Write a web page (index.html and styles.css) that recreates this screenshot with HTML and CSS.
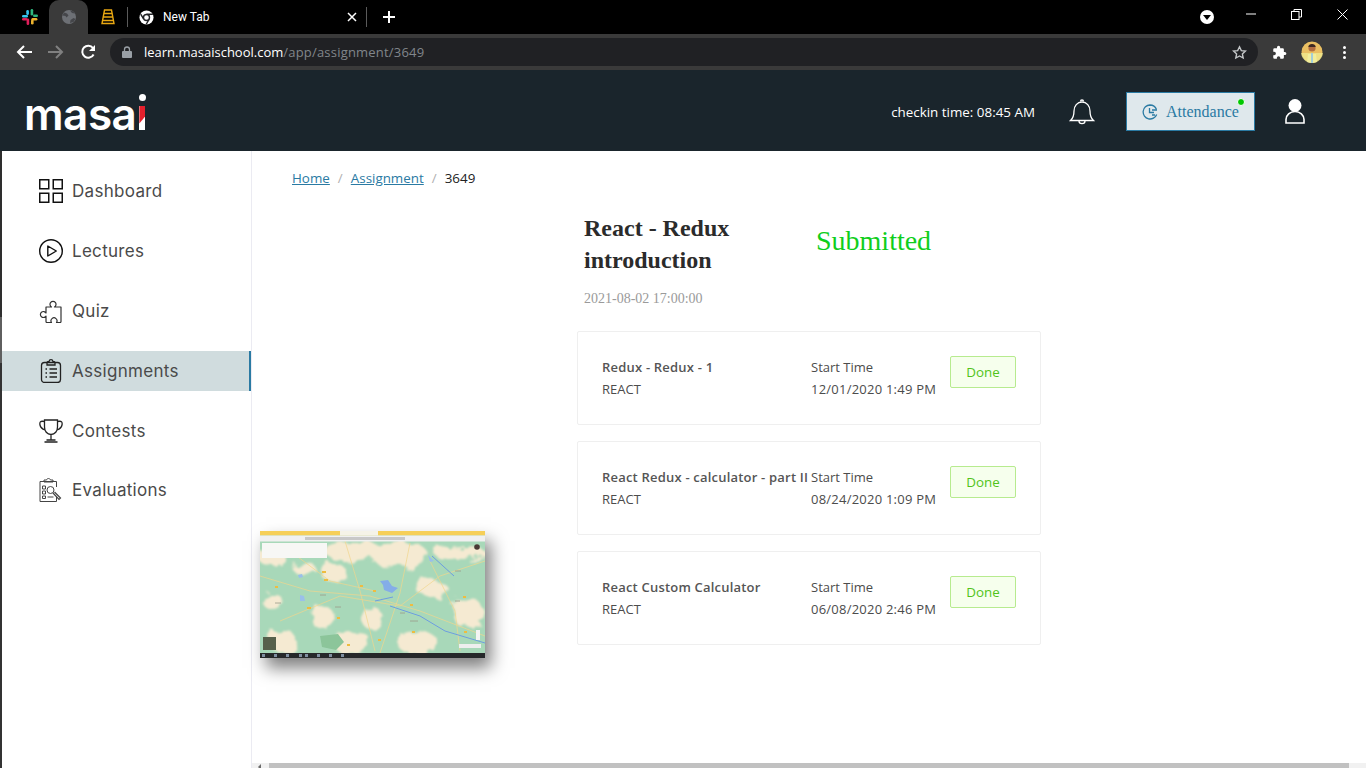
FILE: index.html
```html
<!DOCTYPE html>
<html lang="en">
<head>
<meta charset="UTF-8">
<meta name="viewport" content="width=device-width, initial-scale=1.0">
<title>Assignment 3649</title>
<link rel="stylesheet" href="styles.css">
</head>
<body>

<div class="tabBar">
    <div class="pinnedTab">
        <svg width="18" height="18" viewBox="0 0 18 18">
            <rect x="1" y="7" width="6" height="2.6" rx="1.3" fill="#36c5f0"/><rect x="5.3" y="2" width="2.6" height="5" rx="1.3" fill="#36c5f0"/>
            <rect x="9.6" y="1" width="2.6" height="6.5" rx="1.3" fill="#2eb67d"/><rect x="12" y="6.4" width="5" height="2.6" rx="1.3" fill="#2eb67d"/>
            <rect x="10.4" y="9.9" width="6" height="2.6" rx="1.3" fill="#ecb22e"/><rect x="10" y="11.5" width="2.6" height="5" rx="1.3" fill="#ecb22e"/>
            <rect x="5.6" y="10.5" width="2.6" height="6.5" rx="1.3" fill="#e01e5a"/><rect x="1" y="10" width="5.5" height="2.6" rx="1.3" fill="#e01e5a"/>
        </svg>
    </div>
    <div class="pinnedTab activeTab">
        <svg width="16" height="16" viewBox="0 0 16 16">
            <circle cx="8" cy="8" r="7" fill="#6d7075"/>
            <path d="M3 3.5l3 1 1.5 2-2 2-1-1.500-3-.5zM9 14l.5-3 3-2 2 1-2 3zM9 1.500l2 2.500 3 .5-1-2z" fill="#45464a"/>
        </svg>
    </div>
    <div class="pinnedTab">
        <svg width="14" height="16" viewBox="0 0 14 16" fill="none" stroke="#e8a712" stroke-width="1.400">
            <path d="M3.500 1h7l2.500 13.500h-12zM3 4.500h8M2.500 8h9M2 11.500h10"/>
        </svg>
    </div>
    <div class="tabDivider"></div>
    <div class="openTab">
        <svg width="15" height="15" viewBox="0 0 16 16">
            <circle cx="8" cy="8" r="7.500" fill="#fff"/>
            <path d="M8 4.500h6.800M5 9.800L1.800 4.300M10.900 9.800L7.700 15.200" stroke="#202124" stroke-width="1.500" fill="none"/>
            <circle cx="8" cy="8" r="3.200" fill="#fff" stroke="#202124" stroke-width="1.500"/>
        </svg>
        <span class="tabTitle">New Tab</span>
        <svg class="tabClose" width="10" height="10" viewBox="0 0 10 10"><path d="M1 1l8 8M9 1l-8 8" stroke="#fff" stroke-width="1.500"/></svg>
    </div>
    <div class="tabDivider"></div>
    <svg class="newTab" width="12" height="12" viewBox="0 0 12 12"><path d="M6 0v12M0 6h12" stroke="#fff" stroke-width="2"/></svg>

    <div class="windowButtons">
        <div class="mediaDot"><span class="mediaArrow"></span></div>
        <svg class="winIcon" width="10" height="10" viewBox="0 0 10 10"><path d="M0 5h10" stroke="#fff"/></svg>
        <svg class="winIcon" width="11" height="11" viewBox="0 0 11 11" fill="none" stroke="#fff"><rect x=".5" y="2.500" width="7.500" height="8"/><path d="M3 2.500V.5h7.500v7.500H8"/></svg>
        <svg class="winIcon" width="11" height="11" viewBox="0 0 11 11"><path d="M.5.5l10 10M10.500.5l-10 10" stroke="#fff"/></svg>
    </div>
</div>

<div class="toolBar">
    <svg class="navIcon" width="16" height="14" viewBox="0 0 16 14" fill="none" stroke="#fff" stroke-width="2"><path d="M16 7H2M8 1L2 7l6 6"/></svg>
    <svg class="navIcon" width="16" height="14" viewBox="0 0 16 14" fill="none" stroke="#808080" stroke-width="2"><path d="M0 7h14M8 1l6 6-6 6"/></svg>
    <svg class="navIcon" width="16" height="16" viewBox="0 0 16 16" fill="none"><path d="M13.600 10.500A6 6 0 1 1 13 4" stroke="#fff" stroke-width="2"/><path d="M15 1v6H9z" fill="#fff"/></svg>
    <div class="addressBar">
        <svg width="10" height="12" viewBox="0 0 10 12"><path d="M2.500 5V3.500a2.500 2.500 0 0 1 5 0V5" fill="none" stroke="#9aa0a6" stroke-width="1.300"/><rect y="5" width="10" height="7" rx="1" fill="#9aa0a6"/></svg>
        <div class="urlText"><span class="urlHost">learn.masaischool.com</span>/app/assignment/3649</div>
        <svg class="starIcon" width="15" height="15" viewBox="0 0 24 24" fill="none" stroke="#c4c7c9" stroke-width="2.200"><path d="M12 2.800l2.900 6.100 6.600.8-4.900 4.500 1.300 6.600-5.900-3.300-5.900 3.300 1.300-6.600-4.900-4.500 6.600-.8z"/></svg>
    </div>
    <svg class="extIcon" width="15" height="15" viewBox="0 0 24 24"><path fill="#fff" d="M20.500 11H19V7a2 2 0 0 0-2-2h-4V3.500a2.500 2.500 0 0 0-5 0V5H4a2 2 0 0 0-2 2v3.800h1.500a2.700 2.700 0 0 1 0 5.400H2V20a2 2 0 0 0 2 2h3.800v-1.500a2.700 2.700 0 0 1 5.400 0V22H17a2 2 0 0 0 2-2v-4h1.500a2.500 2.500 0 0 0 0-5z"/></svg>
    <div class="avatar">
        <svg width="22" height="22" viewBox="0 0 22 22"><circle cx="11" cy="11" r="10.500" fill="#eabf62"/><rect x="0" y="12" width="22" height="10" fill="#f0ea8e" opacity=".8"/><circle cx="11" cy="7" r="3.600" fill="#b46f42"/><path d="M7.300 6c0-4 7.400-4 7.400 0z" fill="#3e2a22"/><path d="M6 22l1-9h8l1 9z" fill="#f2ee9c"/><path d="M10 12h2v10h-2z" fill="#a4cfd8"/></svg>
    </div>
    <div class="menuDots"><span></span><span></span><span></span></div>
</div>

<div class="siteHeader">
    <div class="logo">masa<span class="logoI"><span class="logoDot"></span><span class="logoCut"></span></span></div>
    <div class="headerRight">
        <span class="checkin">checkin time: 08:45 AM</span>
        <svg class="bell" width="26" height="27" viewBox="0 0 26 27" fill="none" stroke="#fff" stroke-width="1.300">
            <path d="M1.500 22.500c3-2.500 3.500-5 3.500-9.500 0-5 3.300-9 8-9s8 4 8 9c0 4.500.5 7 3.500 9.500z"/>
            <path d="M11.500 3.500a1.500 1.500 0 0 1 3 0M10 23c0 3.500 6 3.500 6 0"/>
        </svg>
        <button class="attendanceBtn">
            <svg width="16" height="16" viewBox="0 0 16 16" fill="none" stroke="#2a7aa3" stroke-width="1.300"><path d="M14.700 10.500A7 7 0 1 1 8 1c3 0 5.400 1.800 6.500 4.500"/><path d="M7.500 4v4.500H12M10 6h5M10 11h3"/></svg>
            Attendance
            <span class="onlineDot"></span>
        </button>
        <svg class="userIcon" width="20" height="25" viewBox="0 0 20 25" fill="none">
            <circle cx="10" cy="6.500" r="6.500" fill="#fff"/>
            <path d="M1 24v-3.500a9 8 0 0 1 18 0V24z" stroke="#fff" stroke-width="1.600"/>
        </svg>
    </div>
</div>

<div class="pageBody">
    <div class="sidebar">
        <div class="navItem">
            <svg class="navSvg" width="24" height="24" viewBox="0 0 24 24" fill="none" stroke="#111" stroke-width="1.500"><rect x=".75" y=".75" width="9" height="9"/><rect x="14.250" y=".75" width="9" height="9"/><rect x=".75" y="14.250" width="9" height="9"/><rect x="14.250" y="14.250" width="9" height="9"/></svg>
            <span>Dashboard</span>
        </div>
        <div class="navItem">
            <svg class="navSvg" width="24" height="24" viewBox="0 0 24 24" fill="none" stroke="#111" stroke-width="1.400"><circle cx="12" cy="12" r="11.300"/><path d="M8.800 7v10l8.500-5z" stroke-linejoin="round"/></svg>
            <span>Lectures</span>
        </div>
        <div class="navItem">
            <svg class="navSvg" width="24" height="24" viewBox="0 0 24 24" fill="none" stroke="#333" stroke-width="1.200"><path d="M7 8h5.500a3 3 0 1 1 3 0H22v14.500a1 1 0 0 1-1 1h-3.500a3 3 0 1 0-5 0H8a1 1 0 0 1-1-1v-5.500a3 3 0 1 1 0-3z" stroke-linejoin="round"/></svg>
            <span>Quiz</span>
        </div>
        <div class="navItem navActive">
            <svg class="navSvg" width="24" height="24" viewBox="0 0 24 24" fill="none" stroke="#222" stroke-width="1.300"><rect x="2.500" y="3.500" width="19" height="20" rx="3"/><path d="M8 3.500c0-1 1-1 2-1 .5-2.400 3.500-2.400 4 0 1 0 2 0 2 1V6H8zM10.500 10H18M10.500 14H18M10.500 18H18M6.500 10h1.500M6.500 14h1.500M6.500 18h1.500"/></svg>
            <span>Assignments</span>
        </div>
        <div class="navItem">
            <svg class="navSvg" width="24" height="24" viewBox="0 0 24 24" fill="none" stroke="#222" stroke-width="1.300"><path d="M5.500 1h13v7c0 4-2.500 7.500-6.500 7.500S5.500 12 5.500 8zM5.500 2.500C1 1.500.5 3.500 1 6s2.500 4 5 5M18.500 2.500c4.500-1 5 1 4.500 3.500s-2.500 4-5 5M12 15.500V21M5.500 23h13M7.500 21h9"/></svg>
            <span>Contests</span>
        </div>
        <div class="navItem">
            <svg class="navSvg" width="24" height="24" viewBox="0 0 24 24" fill="none" stroke="#444" stroke-width="1"><path d="M17.500 19v4.500H1V3.500h16.500V9M5 3.500V2h2.500c.5-2 3.500-2 4 0H14v2H5z"/><circle cx="11.500" cy="12" r="3.500"/><path d="M14 15l6 6.500 1.500-1.500-6-6" stroke-width="1.200"/><path d="M3.500 8h3v3h-3zM3.500 13h3v3h-3zM3.500 18h3v2.500h-3zM8.500 19h6" /></svg>
            <span>Evaluations</span>
        </div>
    </div>

    <div class="mainArea">
        <div class="breadcrumb">
            <a href="#">Home</a><span class="crumbSep">/</span><a href="#">Assignment</a><span class="crumbSep">/</span><span class="crumbNow">3649</span>
        </div>

        <div class="contentColumn">
            <div class="titleRow">
                <h1 class="assignmentTitle">React - Redux introduction</h1>
                <div class="submittedLabel">Submitted</div>
            </div>
            <div class="dueDate">2021-08-02 17:00:00</div>

            <div class="taskCard">
                <div class="taskInfo">
                    <div class="taskName">Redux - Redux - 1</div>
                    <div class="taskLine">REACT</div>
                </div>
                <div class="taskTime">
                    <div class="taskLine">Start Time</div>
                    <div class="taskLine taskDate">12/01/2020 1:49 PM</div>
                </div>
                <button class="doneBtn">Done</button>
            </div>

            <div class="taskCard">
                <div class="taskInfo">
                    <div class="taskName">React Redux - calculator - part II</div>
                    <div class="taskLine">REACT</div>
                </div>
                <div class="taskTime">
                    <div class="taskLine">Start Time</div>
                    <div class="taskLine taskDate">08/24/2020 1:09 PM</div>
                </div>
                <button class="doneBtn">Done</button>
            </div>

            <div class="taskCard">
                <div class="taskInfo">
                    <div class="taskName">React Custom Calculator</div>
                    <div class="taskLine">REACT</div>
                </div>
                <div class="taskTime">
                    <div class="taskLine">Start Time</div>
                    <div class="taskLine taskDate">06/08/2020 2:46 PM</div>
                </div>
                <button class="doneBtn">Done</button>
            </div>
        </div>

        <!-- floating preview of a shared screen -->
        <div class="screenPreview">
            <svg width="225" height="127" viewBox="0 0 225 127">
                <defs>
                    <filter id="patchy" x="-10%" y="-10%" width="120%" height="120%">
                        <feTurbulence type="fractalNoise" baseFrequency="0.07" numOctaves="3" seed="4" result="noise"/>
                        <feDisplacementMap in="SourceGraphic" in2="noise" scale="16" result="moved"/>
                        <feGaussianBlur in="moved" stdDeviation="0.9"/>
                    </filter>
                    <filter id="softer"><feGaussianBlur stdDeviation=".5"/></filter>
                </defs>
                <rect width="225" height="127" fill="#a8d8b9"/>
                <g filter="url(#patchy)" fill="#f5ead2">
                    <ellipse cx="95" cy="20" rx="32" ry="10"/>
                    <ellipse cx="140" cy="24" rx="28" ry="14"/>
                    <ellipse cx="74" cy="42" rx="13" ry="9"/>
                    <ellipse cx="10" cy="24" rx="14" ry="9"/>
                    <ellipse cx="45" cy="38" rx="11" ry="7"/>
                    <ellipse cx="200" cy="22" rx="26" ry="7"/>
                    <ellipse cx="62" cy="86" rx="13" ry="10"/>
                    <ellipse cx="112" cy="87" rx="10" ry="12"/>
                    <ellipse cx="22" cy="110" rx="14" ry="12"/>
                    <ellipse cx="92" cy="112" rx="20" ry="11"/>
                    <ellipse cx="158" cy="112" rx="21" ry="11"/>
                    <ellipse cx="208" cy="82" rx="15" ry="16"/>
                    <ellipse cx="172" cy="58" rx="16" ry="8"/>
                    <ellipse cx="14" cy="72" rx="10" ry="8"/>
                </g>
                <g filter="url(#softer)" fill="none">
                    <path d="M0 45l50 15 60 5 50 15 65 25M85 10l15 50 15 60M20 90l60-25 60 10 40-30 45-15M150 12l-10 50-20 60M30 20l40 30 45 10M170 30l25 50 5 40" stroke="#f0d68c" stroke-width=".7"/>
                    <path d="M130 75l30 10 25 15 40 12M172 25l22 20M115 70l18-4" stroke="#6d9de0" stroke-width="1"/>
                    <path d="M120 50l8-1 4 6 6 2-6 5-8-3-1-5z" fill="#84ade8"/>
                    <path d="M40 64l4 1 1 5-5 0zM38 44l4-1 1 3-4 1zM168 24l6 6-4 1z" fill="#9abfea"/>
                    <path d="M60 105l18-2 6 8-8 8-14-3z" fill="#8cc59a"/>
                    <path d="M64 48h4v2h-4zM100 54h3v2h-3zM113 59h3v2h-3zM47 76h4v2h-4zM77 86h3v2h-3zM150 73h3v2h-3zM152 100h3v2h-3zM203 65h3v2h-3zM62 40h4v2h-4zM15 55h3v2h-3zM204 100h3v2h-3zM87 113h3v2h-3zM118 108h3v2h-3z" fill="#eebc3f"/>
                    <path d="M60 64h6M15 72h6M75 76h6M150 90h8M140 82h5M195 40h6M195 70h5" stroke="#9a9a88" stroke-width=".8"/>
                </g>
                <rect width="225" height="4.500" fill="#f6cf58"/>
                <rect x="80" width="38" height="4.500" fill="#f5f3e8"/>
                <rect y="4.500" width="225" height="6" fill="#f0f0f0"/>
                <rect x="45" y="6" width="100" height="3" fill="#c8c8c8" filter="url(#softer)"/>
                <rect x="2" y="12" width="65" height="15" fill="#f7f7f5" filter="url(#softer)"/>
                <rect x="3" y="106" width="13" height="13" fill="#56604c" filter="url(#softer)"/>
                <circle cx="217" cy="16" r="2.800" fill="#4a3a35"/>
                <rect x="199" y="113" width="22" height="4" fill="#eee" filter="url(#softer)"/>
                <rect x="216" y="99" width="4" height="10" fill="#f4f4f4" filter="url(#softer)"/>
                <rect y="122" width="225" height="5" fill="#26282a"/>
                <path d="M2 123h3v3H2zM14 123h3v3h-3zM26 123h3v3h-3zM39 123h3v3h-3zM45 123h3v3h-3zM57 123h3v3h-3zM69 123h3v3h-3zM81 123h3v3h-3z" fill="#7f8ea0" filter="url(#softer)"/>
            </svg>
        </div>

        <div class="pageScroll"><span class="scrollArrow"></span><div class="scrollThumb"></div></div>
    </div>
</div>

</body>
</html>
```

FILE: styles.css
```css
html, body {
    height: 100%;
}

body {
    margin: 0;
    overflow: hidden;
    display: flex;
    flex-direction: column;
    font-family: 'Open Sans', sans-serif;
    background-color: #fff;
    color: #333;
}

/* browser chrome */
.tabBar {
    height: 34px;
    background-color: #000;
    display: flex;
    align-items: center;
    padding-left: 10px;
    flex-shrink: 0;
}

.pinnedTab {
    width: 39px;
    height: 34px;
    display: flex;
    align-items: center;
    justify-content: center;
    flex-shrink: 0;
}

.activeTab {
    background-color: #3a3a3a;
    border-radius: 10px 10px 0 0;
}

.tabDivider {
    width: 1px;
    height: 20px;
    background-color: #5a5a5a;
    flex-shrink: 0;
}

.openTab {
    width: 238px;
    display: flex;
    align-items: center;
    padding-left: 11px;
    box-sizing: border-box;
    color: #fff;
}

.tabTitle {
    font-family: 'Roboto', sans-serif;
    font-size: 12px;
    margin-left: 9px;
    flex: 1;
}

.tabClose {
    margin-right: 9px;
}

.newTab {
    margin-left: 16px;
}

.windowButtons {
    margin-left: auto;
    display: flex;
    align-items: center;
    height: 34px;
}

.mediaDot {
    width: 14px;
    height: 14px;
    border-radius: 50%;
    background-color: #fff;
    margin-right: 32px;
    display: flex;
    align-items: center;
    justify-content: center;
}

.mediaArrow {
    width: 0;
    height: 0;
    border-left: 4px solid transparent;
    border-right: 4px solid transparent;
    border-top: 5px solid #000;
    margin-top: 1px;
}

.winIcon {
    margin-right: 35px;
    margin-top: -6px;
}

.winIcon:last-child {
    margin-right: 18px;
}

.toolBar {
    height: 36px;
    background-color: #3a3a3a;
    display: flex;
    align-items: center;
    padding: 0 15px 0 16px;
    flex-shrink: 0;
}

.navIcon {
    margin-right: 16px;
    flex-shrink: 0;
}

.addressBar {
    width: 1148px;
    height: 28px;
    margin-left: -2px;
    background-color: #202124;
    border-radius: 14px;
    display: flex;
    align-items: center;
    padding: 0 11px 0 12px;
    box-sizing: border-box;
    flex-shrink: 0;
}

.urlText {
    margin-left: 12px;
    font-size: 13px;
    color: #80868b;
    flex: 1;
    letter-spacing: 0.2px;
}

.urlHost {
    color: #fff;
    letter-spacing: 0;
}

.extIcon {
    margin-left: 14px;
    flex-shrink: 0;
}

.avatar {
    width: 22px;
    height: 22px;
    margin-left: 14px;
    border-radius: 50%;
    overflow: hidden;
    flex-shrink: 0;
}

.menuDots {
    margin-left: 20px;
    display: flex;
    flex-direction: column;
    gap: 2px;
}

.menuDots span {
    width: 3px;
    height: 3px;
    border-radius: 50%;
    background-color: #fff;
}

/* site header */
.siteHeader {
    height: 81px;
    background-color: #1a252c;
    display: flex;
    align-items: center;
    justify-content: space-between;
    padding: 0 61px 0 24px;
    flex-shrink: 0;
}

.logo {
    font-family: 'Inter', sans-serif;
    font-size: 44px;
    font-weight: 600;
    color: #fff;
    letter-spacing: -0.5px;
    line-height: 1;
    display: flex;
    align-items: baseline;
    margin-top: 6px;
}

.logoI {
    position: relative;
    display: block;
    width: 6px;
    height: 24px;
    margin-left: 3px;
    background-color: #fff;
}

.logoDot {
    position: absolute;
    top: -12px;
    left: 0;
    width: 7px;
    height: 7px;
    border-radius: 50%;
    background-color: #fff;
}

.logoCut {
    position: absolute;
    top: 0;
    left: 0;
    width: 6px;
    height: 24px;
    background-color: #e4202c;
    clip-path: polygon(0 0, 100% 0, 100% 45%, 0 75%);
}

.headerRight {
    display: flex;
    align-items: center;
    margin-top: 2px;
}

.checkin {
    font-size: 13.4px;
    color: #fff;
    margin-right: 34px;
}

.bell {
    margin-right: 31px;
}

.attendanceBtn {
    position: relative;
    width: 129px;
    height: 39px;
    background-color: #dfe8ec;
    border: 1px solid #2a7aa3;
    font-family: 'Liberation Serif', serif;
    font-size: 16px;
    color: #2a7aa3;
    display: flex;
    align-items: center;
    gap: 8px;
    padding: 0 0 0 15px;
    box-sizing: border-box;
    margin-right: 30px;
}

.onlineDot {
    position: absolute;
    top: 5px;
    right: 9px;
    width: 6px;
    height: 6px;
    border-radius: 50%;
    background-color: #00c800;
    border: 1px solid #fff;
}

/* page */
.pageBody {
    flex: 1;
    display: flex;
    min-height: 0;
    border-left: 2px solid #333;
    border-image: linear-gradient(#2e2e2e 166px, #5f5f5f 166px, #5f5f5f 212px, #333 212px) 1;
}

.sidebar {
    width: 250px;
    box-sizing: border-box;
    border-right: 1px solid #ebebf2;
    padding-top: 20px;
    flex-shrink: 0;
}

.navItem {
    height: 40px;
    margin-bottom: 20px;
    display: flex;
    align-items: center;
    padding-left: 37px;
    font-family: 'Inter', sans-serif;
    font-size: 17px;
    letter-spacing: 0.3px;
    color: #4a4a4a;
    box-sizing: border-box;
}

.navItem:last-child {
    margin-top: -1px;
}

.navSvg {
    margin-right: 9px;
    flex-shrink: 0;
}

.navActive {
    background-color: #d0dcde;
    border-right: 2px solid #2a7aa3;
    width: 249px;
}

.mainArea {
    flex: 1;
    position: relative;
    padding-top: 17px;
    min-width: 0;
}

.breadcrumb {
    padding-left: 40px;
    font-size: 13.4px;
    line-height: 20px;
    height: 20px;
}

.breadcrumb a {
    color: #2a7aa3;
}

.crumbSep {
    color: #b0b0b0;
    margin: 0 8px;
}

.crumbNow {
    color: #222;
    font-weight: 500;
}

.contentColumn {
    width: 464px;
    margin: 24px auto 0;
}

.titleRow {
    display: flex;
    padding-left: 7px;
}

.assignmentTitle {
    width: 232px;
    margin: 0;
    font-family: 'Liberation Serif', serif;
    font-size: 24px;
    font-weight: bold;
    line-height: 32px;
    color: #2b2b2b;
    flex-shrink: 0;
}

.submittedLabel {
    font-family: 'Liberation Serif', serif;
    font-size: 28px;
    color: #0fce1c;
    line-height: 34px;
    margin-top: 12px;
}

.dueDate {
    font-family: 'Liberation Serif', serif;
    font-size: 14px;
    line-height: 16px;
    color: #9a9a9a;
    padding-left: 7px;
    margin-top: 15px;
    margin-bottom: 24px;
}

.taskCard {
    height: 94px;
    box-sizing: border-box;
    border: 1px solid #efefef;
    border-radius: 2px;
    display: flex;
    align-items: center;
    padding: 0 24px;
    margin-bottom: 16px;
    font-size: 13px;
}

.taskInfo {
    width: 209px;
    flex-shrink: 0;
    white-space: nowrap;
}

.taskTime {
    width: 139px;
    flex-shrink: 0;
    white-space: nowrap;
}

.taskName {
    font-weight: 600;
    letter-spacing: 0.2px;
    color: #555;
    line-height: 22px;
}

.taskLine {
    color: #4c4c4c;
    line-height: 22px;
}

.taskDate {
    letter-spacing: 0.23px;
}

.doneBtn {
    width: 66px;
    height: 32px;
    margin-bottom: 12px;
    background-color: #f6ffed;
    border: 1px solid #b7eb8f;
    border-radius: 2px;
    color: #52c41a;
    font-family: 'Open Sans', sans-serif;
    font-size: 13.4px;
    padding: 0;
}

.screenPreview {
    position: absolute;
    left: 8px;
    top: 380px;
    width: 225px;
    height: 127px;
    box-shadow: 6px 10px 16px rgba(0, 0, 0, 0.5);
    overflow: hidden;
}

.screenPreview svg {
    display: block;
}

.pageScroll {
    position: absolute;
    left: 0;
    right: 0;
    bottom: 0;
    height: 5px;
    background-color: #f1f1f1;
    display: flex;
}

.scrollArrow {
    width: 17px;
    flex-shrink: 0;
    position: relative;
}

.scrollArrow::after {
    content: '';
    position: absolute;
    left: 6px;
    top: 1px;
    border-top: 3px solid transparent;
    border-bottom: 3px solid transparent;
    border-right: 3px solid #6b6b6b;
}

.scrollThumb {
    width: 1080px;
    background-color: #c1c1c1;
}
```
